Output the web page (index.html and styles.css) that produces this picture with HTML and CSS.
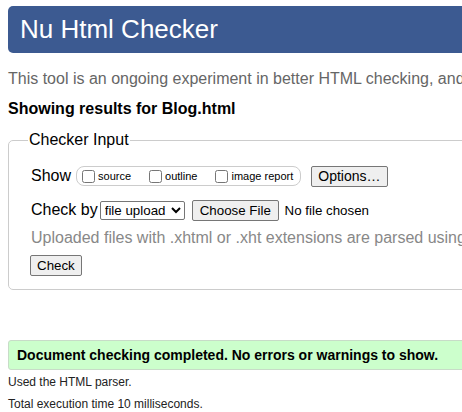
FILE: index.html
```html
<!DOCTYPE html>
<html>
<head>
<meta charset="utf-8">
<title>Nu Html Checker</title>
<link rel="stylesheet" href="styles.css">
</head>
<body>
<div class="page">
  <h1 class="header">Nu Html Checker</h1>
  <p class="intro">This tool is an ongoing experiment in better HTML checking, and its behavior remains subject to change</p>
  <p class="showing">Showing results for Blog.html</p>
  <fieldset class="input">
    <legend>Checker Input</legend>
    <div class="row show-row">
      <span class="label">Show</span>
      <span class="group">
        <label class="opt"><input type="checkbox"> source</label>
        <label class="opt"><input type="checkbox"> outline</label>
        <label class="opt"><input type="checkbox"> image report</label>
      </span>
      <button class="btn">Options…</button>
    </div>
    <div class="row by-row">
      <span class="label">Check by</span>
      <select class="sel"><option>file upload</option></select>
      <span class="file"><button class="btn sm">Choose File</button> No file chosen</span>
    </div>
    <p class="note">Uploaded files with .xhtml or .xht extensions are parsed using the XML parser.</p>
    <button class="btn sm check">Check</button>
  </fieldset>
  <p class="success">Document checking completed. No errors or warnings to show.</p>
  <p class="meta">Used the HTML parser.</p>
  <p class="meta">Total execution time 10 milliseconds.</p>
</div>
</body>
</html>
```
FILE: styles.css
```css
html, body {
  margin: 0;
  padding: 0;
  overflow: hidden;
  background: #fff;
}
body {
  font-family: "Liberation Sans", Arial, sans-serif;
  color: #000;
}
.page {
  width: 1000px;
  padding: 6px 8px 0 8px;
}
.header {
  margin: 0;
  background: #3c5a91;
  color: #fff;
  font-weight: normal;
  font-size: 26px;
  line-height: 47px;
  height: 47px;
  padding: 0 12px;
  border-radius: 5px;
}
.intro {
  margin: 16px 0 0 0;
  font-size: 16px;
  line-height: 20px;
  color: #666;
  white-space: nowrap;
}
.showing {
  margin: 10px 0 0 0;
  font-size: 16px;
  line-height: 20px;
  font-weight: bold;
}
.input {
  margin: 12px 0 0 0;
  border: 1px solid #ccc;
  border-radius: 5px;
  padding: 10px 22px 13px 22px;
}
.input legend {
  font-size: 16px;
  padding: 0 1px;
  margin-left: -3px;
}
.row {
  display: flex;
  align-items: center;
}
.label {
  font-size: 16px;
}
.show-row {
  margin-top: 6px;
  height: 22px;
}
.group {
  display: inline-flex;
  align-items: center;
  margin-left: 5px;
  border: 1px solid #ccc;
  border-radius: 8px;
  height: 18px;
  padding: 0 7px 0 5px;
  gap: 18px;
}
.opt {
  font-size: 11px;
  display: inline-flex;
  align-items: center;
  white-space: nowrap;
}
.opt input {
  margin: 0 3px 0 0;
  width: 13px;
  height: 13px;
}
.btn {
  font-family: "Liberation Sans", Arial, sans-serif;
  font-size: 14px;
  background: #efefef;
  border: 1px solid #767676;
  border-radius: 2px;
  padding: 1px 6px;
  margin-left: 10px;
  height: 21px;
  color: #000;
}
.btn.sm {
  font-size: 13.33px;
}
.by-row {
  margin-top: 12px;
  height: 22px;
}
.sel {
  margin-left: 2px;
  font-family: "Liberation Sans", Arial, sans-serif;
  font-size: 13.33px;
  height: 19px;
  width: 85px;
  border: 1px solid #767676;
  border-radius: 2px;
  background: #fff;
  padding: 0;
}
.file {
  font-size: 13.33px;
  margin-left: -2px;
  white-space: nowrap;
}
.file .btn {
  margin-left: 9px;
  margin-right: 2px;
  padding: 1px 7px;
}
.note {
  margin: 7px 0 0 0;
  font-size: 16px;
  line-height: 20px;
  color: #888;
  white-space: nowrap;
}
.check {
  margin: 7px 0 0 -1px;
}
.success {
  margin: 50px 0 0 0;
  background: #ccffcc;
  border: 1px solid #c8dcc8;
  border-radius: 3px;
  font-weight: bold;
  font-size: 14px;
  line-height: 28px;
  padding: 0 8px;
}
.meta {
  margin: 3px 0 0 0;
  font-size: 12px;
  line-height: 18px;
  color: #222;
}
.meta + .meta {
  margin-top: 4px;
}
```
